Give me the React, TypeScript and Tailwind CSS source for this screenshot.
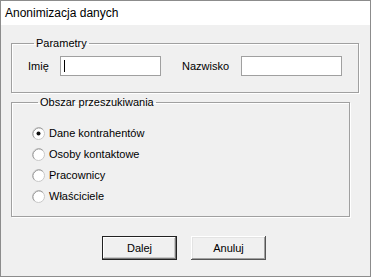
import { useState } from "react";

const areas = [
  "Dane kontrahentów",
  "Osoby kontaktowe",
  "Pracownicy",
  "Właściciele",
];

const Radio = ({ checked }: { checked: boolean }) => (
  <svg width="13" height="13" viewBox="0 0 13 13">
    <circle cx="6.5" cy="6.5" r="6" fill="#fff" stroke="#c8c8c8" />
    <path d="M2.3 10.7 A6 6 0 0 1 10.7 2.3" fill="none" stroke="#9a9a9a" />
    {checked && <circle cx="6.5" cy="6.5" r="2" fill="#111" />}
  </svg>
);

const App = () => {
  const [area, setArea] = useState(0);

  return (
    <div
      className="w-[371px] h-[277px] border border-[#8c8c8c] flex flex-col bg-[#f0f0f0] text-[11px] text-black"
      style={{ fontFamily: '"Liberation Sans", Arial, sans-serif' }}
    >
      <div className="h-[24px] bg-white flex items-center pl-[4px] text-[12px] shrink-0">
        Anonimizacja danych
      </div>

      <div className="flex-1 flex flex-col pt-[12px] pl-[10px]">
        <fieldset className="w-[339px] h-[56px] border border-[#a0a0a0] shadow-[1px_1px_0_#fff,inset_1px_1px_0_#fff] px-[16px]">
          <legend className="ml-[6px] px-[2px] leading-[13px]">Parametry</legend>
          <div className="flex items-center mt-[6px]">
            <span className="w-[32px]">Imię</span>
            <div className="relative">
              <input
                defaultValue=""
                className="w-[101px] h-[20px] border border-[#a0a0a0] bg-white px-[3px] outline-none text-[11px]"
              />
              <span className="absolute left-[4px] top-[4px] w-px h-[12px] bg-black" />
            </div>
            <span className="ml-[21px] w-[59px]">Nazwisko</span>
            <input
              defaultValue=""
              className="w-[101px] h-[20px] border border-[#a0a0a0] bg-white px-[3px] outline-none text-[11px]"
            />
          </div>
        </fieldset>

        <fieldset className="mt-[3px] w-[339px] h-[121px] border border-[#a0a0a0] shadow-[1px_1px_0_#fff,inset_1px_1px_0_#fff] pl-[20px]">
          <legend className="ml-[6px] px-[2px] leading-[13px]">Obszar przeszukiwania</legend>
          <div className="flex flex-col mt-[14px]">
            {areas.map((label, i) => (
              <label
                key={label}
                className="h-[21px] flex items-center gap-[4px] cursor-default"
                onClick={() => setArea(i)}
              >
                <Radio checked={area === i} />
                <span>{label}</span>
              </label>
            ))}
          </div>
        </fieldset>

        <div className="flex gap-[14px] pl-[91px] mt-[19px]">
          <button className="w-[75px] h-[24px] bg-[#f0f0f0] border border-[#222] shadow-[inset_-1px_-1px_0_#7a7a7a,inset_1px_1px_0_#fff,inset_-2px_-2px_0_#c8c8c8]">
            Dalej
          </button>
          <button className="w-[75px] h-[24px] bg-[#f0f0f0] shadow-[inset_-1px_-1px_0_#555,inset_1px_1px_0_#fff,inset_-2px_-2px_0_#a0a0a0,inset_2px_2px_0_#e3e3e3]">
            Anuluj
          </button>
        </div>
      </div>
    </div>
  );
};

export default App;
